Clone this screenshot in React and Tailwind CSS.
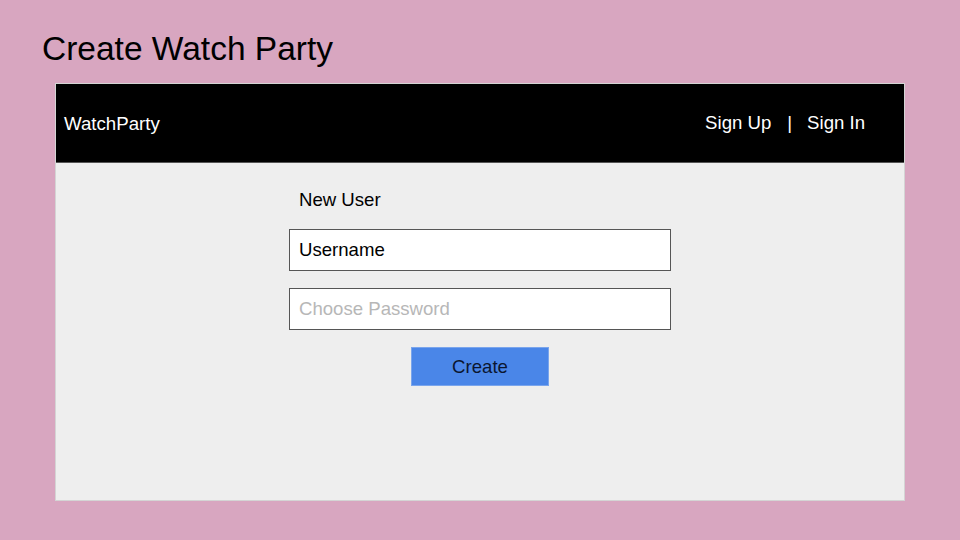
import React from 'react';

const App = () => {
  return (
    <div className="w-[960px] h-[540px] bg-[#d8a6c0] font-['Liberation_Sans',Arial,sans-serif] overflow-hidden">
      {/* Title */}
      <h1 className="pl-[42px] pt-[29px] text-[33.5px] leading-[40px] text-black">Create Watch Party</h1>

      {/* Panel */}
      <div className="ml-[55px] mt-[14px] w-[850px] h-[418px] bg-[#eeeeee] border border-[#d4d4d4] flex flex-col">
        <header className="h-[79px] bg-black border-b border-[#555555] flex items-center justify-between pl-[8px] pr-[39px]">
          <span className="text-white text-[18.7px] mt-[2px]">WatchParty</span>
          <nav className="flex items-center text-white text-[18.6px]">
            <span>Sign Up</span>
            <span className="ml-[16px] mr-[15px]">|</span>
            <span>Sign In</span>
          </nav>
        </header>

        <div className="flex flex-col items-center pt-[24px]">
          <div className="w-[382px]">
            <p className="pl-[10px] text-[18.6px] text-black leading-[26px]">New User</p>
            <input
              className="mt-[16px] w-full h-[42px] bg-white border border-[#555555] px-[9px] text-[18.6px] text-black outline-none"
              defaultValue="Username"
            />
            <input
              className="mt-[17px] w-full h-[42px] bg-white border border-[#555555] px-[9px] text-[18.6px] text-black outline-none placeholder:text-[#b7b7b7]"
              placeholder="Choose Password"
            />
          </div>
          <button className="mt-[17px] w-[138px] h-[39px] bg-[#4a86e8] border border-[#7aa5ec] text-[18.6px] text-[#0b1630]">
            Create
          </button>
        </div>
      </div>
    </div>
  );
};

export default App;
